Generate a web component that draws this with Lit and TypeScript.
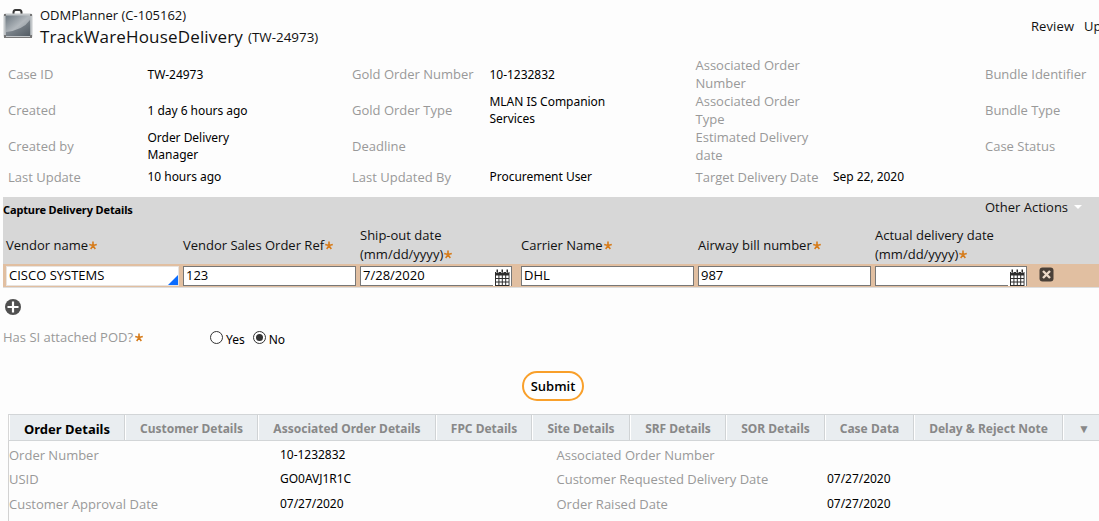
import { LitElement, html, css, svg } from "lit";
import { customElement } from "lit/decorators.js";

const calendar = html`<svg class="cal" width="18" height="17" viewBox="0 0 18 17">
  <rect width="18" height="17" fill="#fff" />
  <path fill="#2c2c2c" d="M2 3h14.500v14H2z" />
  <path fill="#fff" d="M3 1h2.500v3H3zM8 1h2.500v3H8zM13 1h2.500v3H13z" />
  <path fill="#2c2c2c" d="M3.500.5H5v3.200H3.500zM8.500.5H10v3.200H8.500zM13.500.5H15v3.200h-1.500z" />
  ${[3, 6.4, 9.8, 13.2].map((x) => [6.5, 10, 13.5].map((y) => svg`<rect x=${x} y=${y} width="2.4" height="2.5" fill="#fff" />`))}
</svg>`;

const star = html`<svg class="star" width="8" height="9" viewBox="0 0 8 9">
  <path d="M4 4.600V.4M4 4.600L.2 3.600M4 4.600l3.800-1M4 4.600L1.700 8M4 4.600L6.300 8" stroke="#d67c1c" stroke-width="1.600" fill="none" />
</svg>`;

const caseRows = [
  ["Case ID", "TW-24973", "Gold Order Number", "10-1232832", "Associated Order Number", "", "Bundle Identifier"],
  ["Created", "1 day 6 hours ago", "Gold Order Type", "MLAN IS Companion Services", "Associated Order Type", "", "Bundle Type"],
  ["Created by", "Order Delivery Manager", "Deadline", "", "Estimated Delivery date", "", "Case Status"],
  ["Last Update", "10 hours ago", "Last Updated By", "Procurement User", "Target Delivery Date", "Sep 22, 2020", ""],
];
const tabs: [string, number][] = [
  ["Order Details", 116], ["Customer Details", 133], ["Associated Order Details", 178], ["FPC Details", 96],
  ["Site Details", 98], ["SRF Details", 96], ["SOR Details", 99], ["Case Data", 89], ["Delay & Reject Note", 149], ["▼", 42],
];
const details = [
  ["Order Number", "10-1232832", "Associated Order Number", ""],
  ["USID", "GO0AVJ1R1C", "Customer Requested Delivery Date", "07/27/2020"],
  ["Customer Approval Date", "07/27/2020", "Order Raised Date", "07/27/2020"],
];

@customElement("app-root")
export class AppRoot extends LitElement {
  static styles = css`
    :host { display: block; width: 1099px; height: 521px; overflow: hidden; background: #fdfdfd; color: #111;
      font: 13px/18px "Open Sans", "Noto Sans", sans-serif; }
    * { box-sizing: border-box; }
    header { height: 56px; display: flex; padding: 7px 0 0 3px; }
    .bag { margin-top: 1px; flex: none; }
    .titles { margin-left: 7px; flex: 1; white-space: nowrap; }
    .parent { line-height: 17px; }
    .title { font-size: 17px; letter-spacing: .17px; line-height: 26px; display: flex; align-items: center; gap: 5px; }
    .num { font-size: 13.400px; letter-spacing: 0; line-height: 24px; }
    .actions { width: 68px; display: flex; gap: 10px; white-space: nowrap; padding-top: 10px; }
    .actions span:first-child { letter-spacing: .1px; }
    .case { display: grid; height: 141px; padding-left: 8px; align-items: center; align-content: start;
      grid-template-columns: 139.500px 204.500px 137.500px 206px 137.500px 152px 114px;
      grid-template-rows: 36px 36px 36px 25px; }
    .label { color: #999; }
    .l4 { padding-right: 10px; }
    .value { font: 12px/17px "Noto Sans", sans-serif; color: #000; letter-spacing: -.03px; }
    .case .value { max-width: 122px; }
    .panel { margin-left: 3px; height: 91px; background: #d7d7d7; border-bottom: 1px solid #ddd; }
    .bar { height: 26px; display: flex; justify-content: space-between; }
    .bar h2 { margin: 4px 0 0; font: bold 11px/18px "Noto Sans", sans-serif; letter-spacing: -.13px; color: #000; }
    .other { width: 114px; display: flex; gap: 6px; padding-top: 1px; }
    .arrow { width: 0; height: 0; margin-top: 7px; border: 4px solid transparent; border-top-color: #fff; border-bottom: 0; }
    .cols { display: grid; grid-template-columns: 173px 173px 157px 173px 173px 153px 40px; column-gap: 4px; padding-left: 3px; }
    .heads { height: 41px; align-items: center; line-height: 19px; padding-top: 3px; }
    .star { margin-left: 1px; vertical-align: 0; }
    .inputs { background: #e1bfa1; height: 23px; padding-top: 2px; }
    .field { height: 20px; border: 1px solid #777; background: #fff; padding-left: 2px; line-height: 17px; position: relative; color: #000; }
    .pick { border-color: #e8e3df; }
    .pick::after { content: ""; position: absolute; right: 0; bottom: 0; border: 5px solid transparent; border-right-color: #0a6cff; border-bottom-color: #0a6cff; }
    .date { width: 152px; }
    .cal { position: absolute; right: 0; bottom: -1px; }
    .del { margin-left: 7px; margin-top: 1px; }
    .plus { display: block; margin: 11px 0 0 5px; }
    .question { display: flex; height: 30px; margin-top: 6px; padding: 7px 0 0 3px; }
    .q { width: 207px; }
    .q .star { margin-left: 2px; }
    .radio { display: flex; margin-right: 8px; font: 12px/18px "Noto Sans", sans-serif; gap: 3px; color: #000; }
    .radio span { padding-top: 3px; }
    .radio svg { margin-top: 3px; }
    .submit { display: block; width: 62px; height: 30px; margin: 20px 0 13px 522px; padding: 0; border: 2px solid #f9a02b; border-radius: 15px;
      background: #fff; color: #000; font: 600 13px/24px "Open Sans", "Noto Sans", sans-serif; }
    .tabs { display: flex; margin-left: 8px; height: 27px; border-top: 1px solid #d2d5d7; border-bottom: 1px solid #d2d5d7; border-left: 1px solid #d7d7d7; }
    .tab { flex: none; background: #e9edf0; border-right: 1px solid #d0d3d5; border-left: 1px solid #fff; text-align: center;
      font: bold 12px/27px "Noto Sans", sans-serif; color: #888; white-space: nowrap; }
    .tab:first-child { color: #000; font-size: 13px; line-height: 28px; }
    .details { margin-left: 8px; border-left: 1px solid #d2d2d2; height: 80px; padding-top: 2px; display: grid; align-items: center;
      grid-template-columns: 271px 276.500px 270.500px 270px; grid-template-rows: 24px 24px 26px; align-content: start; }
    .details .value { line-height: 16px; padding-bottom: 1px; }
    .details .label { padding-bottom: .5px; }
  `;

  render() {
    const req = (t: unknown) => html`<div>${t}${star}</div>`;
    return html`
      <header>
        <svg class="bag" width="30" height="31" viewBox="0 0 30 31">
          <defs>
            <linearGradient id="g" x1="0" y1="0" x2="1" y2="1"><stop stop-color="#66717a" /><stop offset=".5" stop-color="#b2b8bd" /><stop offset="1" stop-color="#7b848b" /></linearGradient>
            <linearGradient id="h" x1="0" y1="0" x2="1" y2="1"><stop stop-color="#99a1a8" /><stop offset="1" stop-color="#535c64" /></linearGradient>
          </defs>
          <path d="M10.500 6V4.500q0-2.500 2-2.500h4q2 0 2 2.500V6" fill="none" stroke="#383838" stroke-width="2" />
          <rect x="1.500" y="6.500" width="27" height="22.500" rx="1" fill="url(#g)" stroke="#c3c7ca" stroke-width="2" />
          <path d="M3 24Q20 22 27 12V28H3z" fill="url(#h)" />
          <path d="M1 29.500h28" stroke="#777" />
          <path d="M1 6h2v2H1zM27 6h2v2h-2zM1 27h2v2H1zM27 27h2v2h-2z" fill="#777" />
        </svg>
        <div class="titles">
          <div class="parent">ODMPlanner (C-105162)</div>
          <div class="title">TrackWareHouseDelivery <span class="num">(TW-24973)</span></div>
        </div>
        <div class="actions"><span>Review</span><span>Up</span></div>
      </header>
      <section class="case">
        ${caseRows.map((r) => r.map((t, i) => html`<div class=${i % 2 ? "value" : i === 4 ? "label l4" : "label"}>${t}</div>`))}
      </section>
      <section class="panel">
        <div class="bar"><h2>Capture Delivery Details</h2><div class="other">Other Actions<i class="arrow"></i></div></div>
        <div class="cols heads">
          ${req("Vendor name")}${req("Vendor Sales Order Ref")}${req(html`Ship-out date<br />(mm/dd/yyyy)`)}
          ${req("Carrier Name")}${req("Airway bill number")}${req(html`Actual delivery date<br />(mm/dd/yyyy)`)}
        </div>
        <div class="cols inputs">
          <div class="field pick">CISCO SYSTEMS</div><div class="field">123</div><div class="field date">7/28/2020${calendar}</div>
          <div class="field">DHL</div><div class="field">987</div><div class="field date">${calendar}</div>
          <svg class="del" width="15" height="15" viewBox="0 0 15 15"><rect x=".5" y=".5" width="14" height="14" rx="3" fill="#4a4038" /><path d="M4 4l7 7M11 4l-7 7" stroke="#ecd9c8" stroke-width="2.400" /></svg>
        </div>
      </section>
      <svg class="plus" width="16" height="16" viewBox="0 0 16 16"><circle cx="8" cy="8" r="8" fill="#505050" /><path d="M8 2.500v11M2.500 8h11" stroke="#fff" stroke-width="2.200" /></svg>
      <div class="question">
        <div class="q label">Has SI attached POD?${star}</div>
        <div class="radio"><svg width="13" height="13" viewBox="0 0 13 13"><circle cx="6.500" cy="6.500" r="6" fill="#fff" stroke="#333" /></svg><span>Yes</span></div>
        <div class="radio"><svg width="13" height="13" viewBox="0 0 13 13"><circle cx="6.500" cy="6.500" r="6" fill="#fff" stroke="#333" /><circle cx="6.500" cy="6.500" r="3.500" fill="#333" /></svg><span>No</span></div>
      </div>
      <button class="submit">Submit</button>
      <nav class="tabs">${tabs.map(([t, w]) => html`<div class="tab" style="width:${w}px">${t}</div>`)}</nav>
      <section class="details">
        ${details.map((r) => r.map((t, i) => html`<div class=${i % 2 ? "value" : "label"}>${t}</div>`))}
      </section>`;
  }
}
